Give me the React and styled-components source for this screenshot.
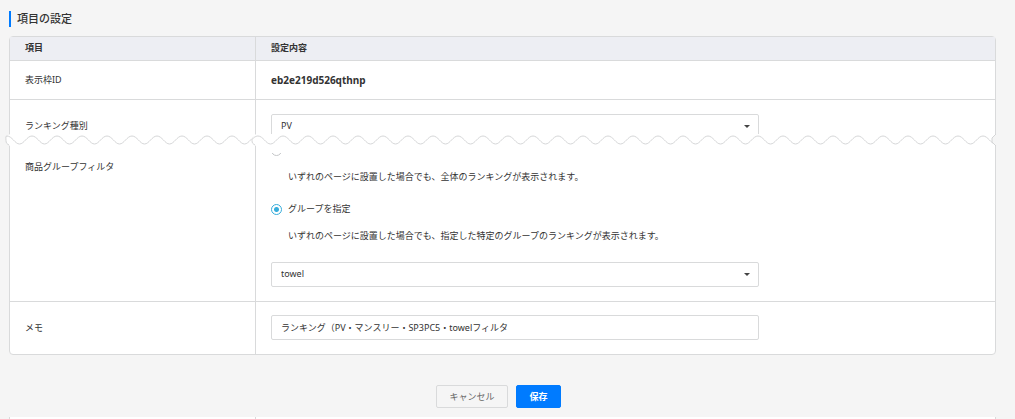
import React from "react";
import styled, { createGlobalStyle } from "styled-components";

const line = "#d9dadb";

const GlobalStyle = createGlobalStyle`
  *, *::before, *::after { box-sizing: border-box; }
  body {
    margin: 0;
    background: #f5f5f5;
    color: #333;
    font: 9px/16px "Noto Sans", "Noto Sans CJK JP", sans-serif;
  }
`;

const Page = styled.main`
  padding: 11px 19px 0 9px;
`;

const Title = styled.h1`
  margin: 0 0 9px;
  padding-left: 6px;
  border-left: 2px solid #007bff;
  font-size: 11px;
  line-height: 16px;
  font-weight: 500;
`;

const Table = styled.table`
  width: 100%;
  table-layout: fixed;
  border-collapse: separate;
  border-spacing: 0;
  background: #fff;
  border: 1px solid ${line};
  border-radius: 4px;
`;

const HeadCell = styled.th`
  width: ${(p) => (p.$narrow ? "245px" : "auto")};
  height: 24px;
  padding: 0 15px 2px;
  text-align: left;
  font-weight: 700;
  background: #edeef3;
  border-bottom: 1px solid ${line};
  & + & { border-left: 1px solid ${line}; }
`;

const RowLabel = styled.th`
  position: relative;
  padding: ${(p) => p.$pad || "0"} 15px 0;
  text-align: left;
  vertical-align: ${(p) => (p.$pad ? "top" : "middle")};
  font-weight: 400;
`;

const Value = styled.td`
  position: relative;
  padding: ${(p) => p.$pad || "0 15px"};
  border-left: 1px solid ${line};
  vertical-align: top;
`;

const Row = styled.tr`
  height: ${(p) => p.$height};
  & > * { border-bottom: ${(p) => (p.$open ? "0" : `1px solid ${line}`)}; }
  &:last-child > * { border-bottom: 0; }
`;

const Code = styled.strong`
  display: block;
  font-size: 10px;
  line-height: 38px;
`;

const Clip = styled.div`
  display: flex;
  align-items: ${(p) => (p.$end ? "flex-end" : "flex-start")};
  height: ${(p) => p.$height};
  overflow: hidden;
`;

const SelectWrap = styled.div`
  position: relative;
  width: 100%;
  max-width: 488px;
  &::after {
    content: "";
    position: absolute;
    right: 9px;
    top: 11px;
    border: 3px solid transparent;
    border-top-color: #444;
    border-bottom: 0;
    pointer-events: none;
  }
`;

const fieldCss = `
  display: block;
  width: 100%;
  max-width: 488px;
  height: 25px;
  margin: 0;
  padding: 0 9px 1px;
  border: 1px solid ${line};
  border-radius: 2px;
  background: #fff;
  color: #333;
  font: inherit;
`;

const Select = styled.select`
  ${fieldCss}
  appearance: none;
`;

const Input = styled.input`
  ${fieldCss}
`;

const Radio = styled.input`
  appearance: none;
  flex: none;
  width: 11px;
  height: 11px;
  margin: 0;
  border: 1px solid #c4c6c8;
  border-radius: 50%;
  background: #fff;
  &:checked {
    border-color: #36addb;
    background: radial-gradient(circle, #36addb 0 2px, #fff 3px);
  }
`;

const RadioLabel = styled.label`
  display: flex;
  align-items: center;
  gap: 6px;
`;

const Hint = styled.p`
  margin: ${(p) => p.$margin};
  padding-left: 17px;
`;

const TearBox = styled.div`
  position: absolute;
  top: -6px;
  left: -5px;
  right: 0;
  height: 12px;
  & > svg { display: block; }
`;

const TearEnd = styled.svg`
  position: absolute;
  top: 0;
  right: -1px;
`;

const Actions = styled.div`
  display: flex;
  justify-content: center;
  gap: 8px;
  padding: 30px 8px 9px 0;
`;

const Button = styled.button`
  width: ${(p) => (p.$primary ? "45px" : "72px")};
  height: 23px;
  padding: 0;
  border: 1px solid ${(p) => (p.$primary ? "#007bff" : line)};
  border-radius: 2px;
  background: ${(p) => (p.$primary ? "#007bff" : "#f5f5f5")};
  color: ${(p) => (p.$primary ? "#fff" : "#666")};
  font: inherit;
  font-weight: ${(p) => (p.$primary ? 700 : 400)};
`;

const NextTable = styled.div`
  display: flex;
  height: 2px;
  background: #fff;
  border: solid ${line};
  border-width: 0 1px;
  &::before {
    content: "";
    width: 246px;
    border-right: 1px solid ${line};
  }
`;

function Tear({ id, start, end }) {
  return (
    <TearBox aria-hidden="true">
      <svg width="100%" height="12">
        <defs>
          <pattern id={id} x={start} width="25" height="12" patternUnits="userSpaceOnUse">
            <path
              d="M0 2C5 2 8 10 12.500 10S20 2 25 2"
              fill="none"
              stroke="#d4d5d6"
            />
          </pattern>
        </defs>
        <path d="M5 0C3 2 1 3 1 6s2 4 4 6h5V0z" fill="#fff" />
        <rect x="5" width="100%" height="12" fill="#fff" />
        <rect x={start} width="100%" height="12" fill={`url(#${id})`} />
        <path
          d={`M${start} 2C${start - 2} 2 1 4 1 6.500S2 10 4 11`}
          fill="none"
          stroke="#d4d5d6"
        />
      </svg>
      {end && (
        <TearEnd width="5" height="12">
          <path d="M5 0L1 4v4l4 4z" fill="#f5f5f5" />
          <path d="M5 0L1 4v4l4 4" fill="none" stroke="#d4d5d6" />
        </TearEnd>
      )}
    </TearBox>
  );
}

export default function App() {
  return (
    <>
      <GlobalStyle />
      <Page>
        <Title>項目の設定</Title>
        <Table>
          <thead>
            <tr>
              <HeadCell $narrow>項目</HeadCell>
              <HeadCell>設定内容</HeadCell>
            </tr>
          </thead>
          <tbody>
            <Row $height="39px">
              <RowLabel scope="row">表示枠ID</RowLabel>
              <Value>
                <Code>eb2e219d526qthnp</Code>
              </Value>
            </Row>
            <Row $height="40px" $open>
              <RowLabel scope="row" $pad="18px">
                <label htmlFor="kind">ランキング種別</label>
              </RowLabel>
              <Value $pad="14px 15px 0">
                <Clip $height="20px">
                  <SelectWrap>
                    <Select id="kind">
                      <option>PV</option>
                    </Select>
                  </SelectWrap>
                </Clip>
              </Value>
            </Row>
            <Row $height="162px">
              <RowLabel scope="row" $pad="19px">
                <Tear id="wave-label" start={2} />
                商品グループフィルタ
              </RowLabel>
              <Value $pad="13px 15px 14px">
                <Tear id="wave-value" start={7} end />
                <Clip $height="3px" $end>
                  <Radio type="radio" name="filter" aria-label="全体" />
                </Clip>
                <Hint $margin="13px 0 16px">
                  いずれのページに設置した場合でも、全体のランキングが表示されます。
                </Hint>
                <RadioLabel>
                  <Radio type="radio" name="filter" defaultChecked />
                  グループを指定
                </RadioLabel>
                <Hint $margin="11px 0 18px">
                  いずれのページに設置した場合でも、指定した特定のグループのランキングが表示されます。
                </Hint>
                <SelectWrap>
                  <Select aria-label="グループ">
                    <option>towel</option>
                  </Select>
                </SelectWrap>
              </Value>
            </Row>
            <Row $height="52px">
              <RowLabel scope="row">
                <label htmlFor="memo">メモ</label>
              </RowLabel>
              <Value $pad="13px 15px 14px">
                <Input id="memo" defaultValue="ランキング（PV・マンスリー・SP3PC5・towelフィルタ" />
              </Value>
            </Row>
          </tbody>
        </Table>
        <Actions>
          <Button type="button">キャンセル</Button>
          <Button type="button" $primary>
            保存
          </Button>
        </Actions>
        <NextTable />
      </Page>
    </>
  );
}
